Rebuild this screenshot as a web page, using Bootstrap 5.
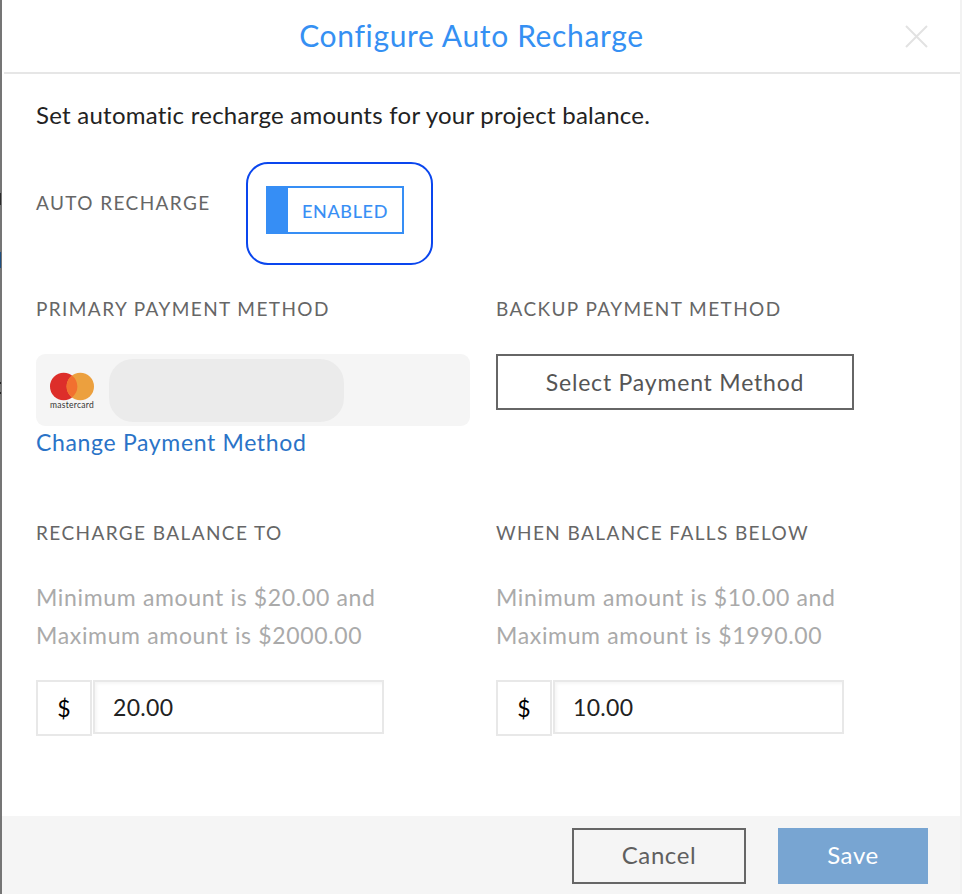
<!DOCTYPE html>
<html lang="en">
<head>
<meta charset="utf-8">
<title>Configure Auto Recharge</title>
<link href="https://cdn.jsdelivr.net/npm/bootstrap@5.3.0/dist/css/bootstrap.min.css" rel="stylesheet">
<style>
html,body{height:100%}
body{background:linear-gradient(#2b2b2b,#2b2b2b) 0 193px/1px 12px no-repeat,linear-gradient(#1f4f80,#1f4f80) 0 252px/1px 16px no-repeat,linear-gradient(#222,#222) 0 382px/1px 2px no-repeat,linear-gradient(#222,#222) 0 392px/1px 2px no-repeat,#757575;font-family:Lato,"Liberation Sans",sans-serif;color:#222;padding:0 2px 0 2px;overflow:hidden}
.rc-dialog{height:894px;border:0;border-radius:0;background:#fff;display:flex;flex-direction:column;box-shadow:2px 0 0 #f2f2f2}
.rc-head{height:74px;padding:0 32px 0 37px;border-bottom:2px solid #e6e6e6;margin-left:2px;flex-shrink:0;border-radius:0}
.rc-title{flex:1;text-align:center;font-size:30px;line-height:1;color:#3590f3;font-weight:400;margin:0 2px 3px 0;letter-spacing:.65px}
.rc-close{width:24px;height:24px;padding:0;border:0;background:none;display:block;margin-bottom:4px}
.rc-body{flex:1;padding:0 0 0 34px;display:block}
.rc-intro{font-size:24px;line-height:30px;margin:26px 0 0;letter-spacing:.25px;color:#222}
.rc-label{font-size:19px;line-height:24px;color:#666;letter-spacing:1.4px;text-transform:uppercase;margin:0}
.rc-auto{display:flex;align-items:flex-start;margin-top:32px}
.rc-auto .rc-label{width:210px;padding-top:29px}
.rc-ring{width:187px;height:103px;border:2px solid #0a46ee;border-radius:22px;display:flex;align-items:center;justify-content:center;padding:0 10px 7px 0}
.rc-toggle{width:138px;height:48px;border:2px solid #368ef5;display:flex;align-items:stretch;padding:0;background:#fff;border-radius:0}
.rc-knob{width:20px;background:#368ef5;flex-shrink:0}
.rc-state{flex:1;color:#368ef5;font-size:18px;letter-spacing:.7px;line-height:46px;text-align:center;padding-left:1px;-webkit-text-stroke:.15px #368ef5}
.rc-cols{--bs-gutter-x:0;width:920px}
.rc-cols>div{width:460px;flex:0 0 460px}
.rc-r1{margin-top:32px}
.rc-r2{margin-top:63px}
.rc-card{width:434px;height:72px;margin-top:33px;background:#f5f5f5;border-radius:9px;display:flex;flex-direction:row;align-items:center;padding:0 0 0 5px;border:0}
.rc-logo{width:68px;height:72px;flex-shrink:0}
.rc-pill{width:235px;height:63px;background:#ebebeb;border-radius:24px}
.rc-link{display:block;font-size:23px;line-height:32px;color:#2a73c7;text-decoration:none;letter-spacing:.66px}
.rc-select{width:358px;height:56px;margin-top:33px;border:2px solid #666;border-radius:0;background:#fff;color:#555;font-size:23px;letter-spacing:.8px;padding:0;display:block}
.rc-hint{font-size:23px;line-height:38px;color:#aaa;margin:33px 0 0;letter-spacing:.66px}
.rc-group{width:348px;margin-top:26px;align-items:flex-start;flex-wrap:nowrap}
.rc-addon{width:56px;height:56px;border:2px solid #e8e8e8;border-radius:0;background:#fff;color:#000;font-size:23px;justify-content:center;padding:0;flex-shrink:0;margin-left:0}
.rc-input{height:54px;border:2px solid #e8e8e8;border-radius:0!important;margin-left:1px!important;color:#222;font-size:23px;letter-spacing:.3px;padding:0 0 0 18px;box-shadow:inset 2px 2px 3px rgba(0,0,0,.04);background:#fff;font-family:inherit}
.rc-foot{height:78px;background:#f5f5f5;border:0;border-radius:0;padding:12px 32px 10px 0;justify-content:flex-end;gap:32px;flex-shrink:0;margin:0}
.rc-foot .btn{margin:0;border-radius:0;height:56px;font-size:24px;letter-spacing:.6px;padding:0 0 2px;font-family:inherit}
.rc-cancel{width:174px;border:2px solid #666;color:#5f5f5f;background:transparent}
.rc-save{width:150px;border:0;background:#78a5d2;color:#fff;opacity:1}
</style>
</head>
<body>
<div class="modal-content rc-dialog">
  <div class="modal-header rc-head d-flex align-items-center">
    <h1 class="modal-title rc-title">Configure Auto Recharge</h1>
    <button type="button" class="rc-close" aria-label="Close">
      <svg width="24" height="24" viewBox="0 0 24 24" fill="none" stroke="#e2e2e2" stroke-width="2"><path d="M2 2 23 23M23 2 2 23"/></svg>
    </button>
  </div>
  <div class="modal-body rc-body">
    <p class="rc-intro">Set automatic recharge amounts for your project balance.</p>
    <div class="rc-auto">
      <p class="rc-label">Auto Recharge</p>
      <div class="rc-ring">
        <button type="button" class="rc-toggle"><span class="rc-knob"></span><span class="rc-state">ENABLED</span></button>
      </div>
    </div>
    <div class="row rc-cols rc-r1">
      <div>
        <p class="rc-label">Primary Payment Method</p>
        <div class="card rc-card">
          <svg class="rc-logo" viewBox="0 0 68 72" role="img" aria-label="Mastercard">
            <circle cx="22.7" cy="32.5" r="13.7" fill="#dd2e2a"/>
            <circle cx="39.3" cy="32.5" r="13.7" fill="#eca03e"/>
            <path d="M31 21.6a13.7 13.7 0 0 1 0 21.8a13.7 13.7 0 0 1 0-21.8z" fill="#f2702f"/>
            <text x="31" y="54" text-anchor="middle" font-family="Lato,sans-serif" font-size="8.5" letter-spacing=".25" fill="#333">mastercard</text>
          </svg>
          <div class="rc-pill"></div>
        </div>
        <a class="rc-link" href="#">Change Payment Method</a>
      </div>
      <div>
        <p class="rc-label">Backup Payment Method</p>
        <button type="button" class="btn rc-select">Select Payment Method</button>
      </div>
    </div>
    <div class="row rc-cols rc-r2">
      <div>
        <p class="rc-label">Recharge Balance To</p>
        <p class="rc-hint">Minimum amount is $20.00 and<br>Maximum amount is $2000.00</p>
        <div class="input-group rc-group">
          <span class="input-group-text rc-addon">$</span>
          <input class="form-control rc-input" type="text" value="20.00" aria-label="Recharge balance to">
        </div>
      </div>
      <div>
        <p class="rc-label">When Balance Falls Below</p>
        <p class="rc-hint">Minimum amount is $10.00 and<br>Maximum amount is $1990.00</p>
        <div class="input-group rc-group">
          <span class="input-group-text rc-addon">$</span>
          <input class="form-control rc-input" type="text" value="10.00" aria-label="When balance falls below">
        </div>
      </div>
    </div>
  </div>
  <div class="modal-footer rc-foot d-flex">
    <button type="button" class="btn rc-cancel">Cancel</button>
    <button type="button" class="btn rc-save">Save</button>
  </div>
</div>
<script src="https://cdn.jsdelivr.net/npm/bootstrap@5.3.0/dist/js/bootstrap.bundle.min.js"></script>
</body>
</html>
